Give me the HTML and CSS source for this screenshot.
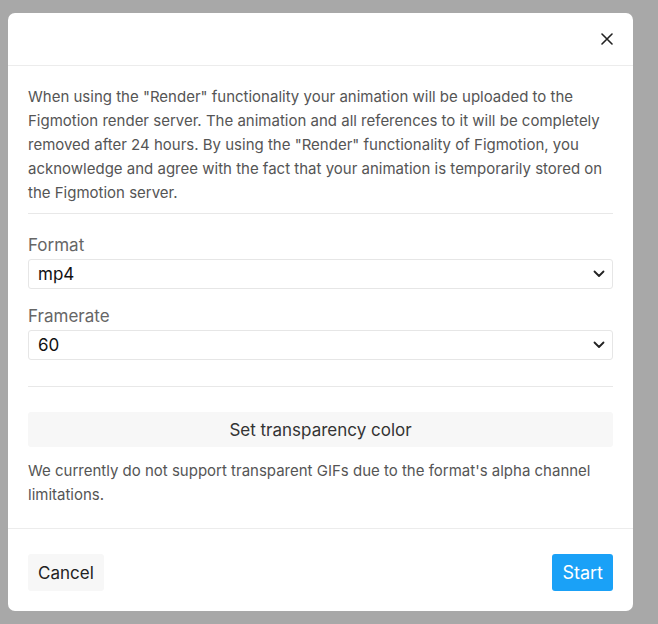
FILE: index.html
```html
<!DOCTYPE html>
<html>
<head>
<meta charset="utf-8">
<link rel="stylesheet" href="styles.css">
</head>
<body>
<div class="modal">
  <div class="modal-header">
    <button class="close" aria-label="Close">
      <svg width="12" height="12" viewBox="0 0 12 12"><path d="M1 1L11 11M11 1L1 11" stroke="#222" stroke-width="1.6" stroke-linecap="round"/></svg>
    </button>
  </div>
  <div class="modal-body">
    <p class="info">When using the "Render" functionality your animation will be uploaded to the Figmotion render server. The animation and all references to it will be completely removed after 24 hours. By using the "Render" functionality of Figmotion, you acknowledge and agree with the fact that your animation is temporarily stored on the Figmotion server.</p>
    <div class="divider first"></div>
    <label class="label">Format</label>
    <div class="select">
      <span>mp4</span>
      <svg width="12" height="8" viewBox="0 0 12 8"><path d="M1.5 1.5L6 6L10.5 1.5" fill="none" stroke="#222" stroke-width="1.8" stroke-linecap="round" stroke-linejoin="round"/></svg>
    </div>
    <label class="label second">Framerate</label>
    <div class="select">
      <span>60</span>
      <svg width="12" height="8" viewBox="0 0 12 8"><path d="M1.5 1.5L6 6L10.5 1.5" fill="none" stroke="#222" stroke-width="1.8" stroke-linecap="round" stroke-linejoin="round"/></svg>
    </div>
    <div class="divider second"></div>
    <button class="btn-wide">Set transparency color</button>
    <p class="note">We currently do not support transparent GIFs due to the format's alpha channel limitations.</p>
  </div>
  <div class="modal-footer">
    <button class="btn btn-light">Cancel</button>
    <button class="btn btn-primary">Start</button>
  </div>
</div>
</body>
</html>
```

FILE: styles.css
```css
html, body {
  margin: 0;
  padding: 0;
}
body {
  background: #a8a8a8;
  font-family: Inter, "Noto Sans", sans-serif;
  padding: 13px 0 0 8px;
  height: 624px;
  box-sizing: border-box;
}
.modal {
  width: 625px;
  height: 598px;
  background: #fff;
  border-radius: 7px;
  display: flex;
  flex-direction: column;
}
.modal-header {
  height: 52px;
  border-bottom: 1px solid #ececec;
  display: flex;
  align-items: center;
  justify-content: flex-end;
  padding: 0 20px;
}
.close {
  background: none;
  border: 0;
  padding: 0;
  width: 12px;
  height: 12px;
  display: flex;
}
.modal-body {
  padding: 19px 20px 0 20px;
  flex: 1;
}
.info, .note {
  margin: 0;
  font-size: 15px;
  line-height: 24px;
  color: #555;
}
.divider {
  height: 1px;
  background: #e8e8e8;
}
.divider.first {
  margin-top: 8px;
}
.label {
  display: block;
  font-size: 17px;
  line-height: 24px;
  color: #666;
  margin-top: 19px;
  margin-bottom: 2px;
}
.label.second {
  margin-top: 15px;
}
.select {
  height: 30px;
  box-sizing: border-box;
  border: 1px solid #e6e6e6;
  border-radius: 3px;
  display: flex;
  align-items: center;
  justify-content: space-between;
  padding: 0 7px 0 9px;
  font-size: 17px;
  color: #111;
}
.divider.second {
  margin-top: 26px;
}
.btn-wide {
  display: block;
  width: 100%;
  height: 35px;
  margin-top: 25px;
  border: 0;
  border-radius: 3px;
  background: #f7f7f7;
  font-family: inherit;
  font-size: 17px;
  color: #333;
}
.note {
  margin-top: 12px;
}
.modal-footer {
  border-top: 1px solid #ececec;
  display: flex;
  justify-content: space-between;
  align-items: flex-start;
  padding: 25px 20px 20px 20px;
}
.btn {
  height: 37px;
  border: 0;
  border-radius: 3px;
  font-family: inherit;
  font-size: 17px;
  padding: 0 10px;
}
.btn-light {
  background: #f7f7f7;
  color: #222;
}
.btn-primary {
  background: #1aa1f7;
  color: #fff;
  font-size: 18px;
}
```
